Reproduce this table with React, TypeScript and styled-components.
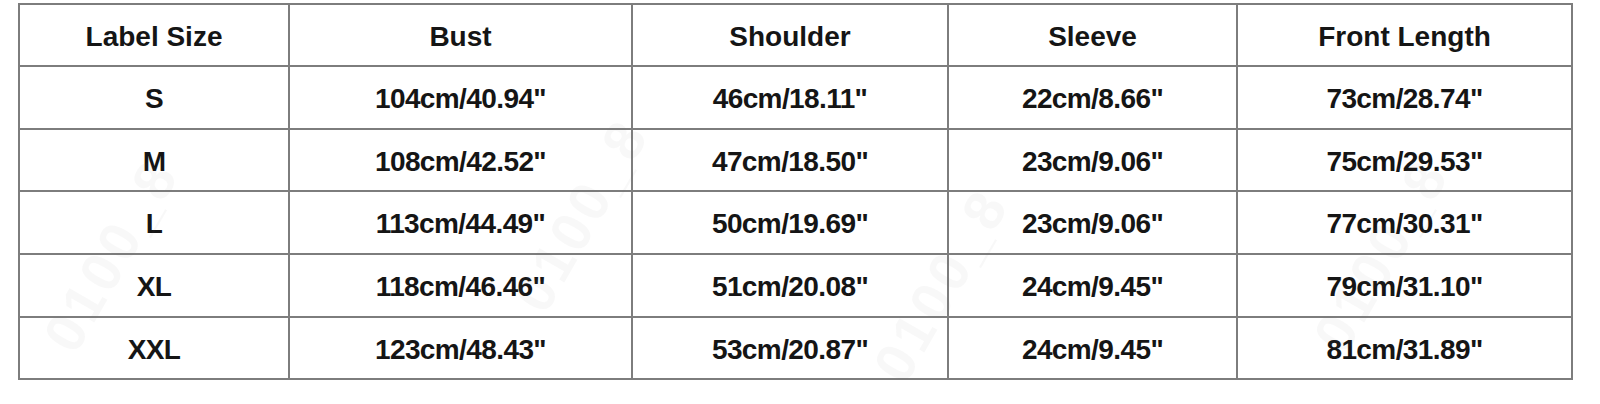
import React from "react";
import styled, { createGlobalStyle } from "styled-components";

const Global = createGlobalStyle`
  html, body { margin: 0; padding: 0; background: #ffffff; }
  body { font-family: "Liberation Sans", Arial, sans-serif; }
`;

const Page = styled.div`
  position: relative;
  width: 1600px;
  height: 404px;
  overflow: hidden;
  padding: 3px 0 0 18px;
  box-sizing: border-box;
`;

const Grid = styled.div`
  display: grid;
  grid-template-columns: 268px 341px 314px 287px 333px;
  grid-template-rows: 60px 61px 60px 61px 61px 60px;
  gap: 2px;
  padding: 2px;
  width: max-content;
  background: #7d7d7d;
`;

const Cell = styled.div<{ $head?: boolean }>`
  background: #ffffff;
  display: flex;
  align-items: center;
  justify-content: center;
  font-family: "Liberation Sans", Arial, sans-serif;
  font-weight: 700;
  font-size: 28px;
  letter-spacing: ${(p) => (p.$head ? "0" : "-0.6px")};
  color: #151515;
  padding-top: 3px;
`;

const Watermark = styled.span<{ $x: number; $y: number }>`
  position: absolute;
  left: ${(p) => p.$x}px;
  top: ${(p) => p.$y}px;
  transform: rotate(-60deg);
  transform-origin: left top;
  font-family: "Liberation Sans", Arial, sans-serif;
  font-size: 56px;
  font-weight: 700;
  color: rgba(120, 120, 120, 0.05);
  pointer-events: none;
  white-space: nowrap;
  letter-spacing: 4px;
`;

const headers = ["Label Size", "Bust", "Shoulder", "Sleeve", "Front Length"];
const rows = [
  ["S", '104cm/40.94"', '46cm/18.11"', '22cm/8.66"', '73cm/28.74"'],
  ["M", '108cm/42.52"', '47cm/18.50"', '23cm/9.06"', '75cm/29.53"'],
  ["L", '113cm/44.49"', '50cm/19.69"', '23cm/9.06"', '77cm/30.31"'],
  ["XL", '118cm/46.46"', '51cm/20.08"', '24cm/9.45"', '79cm/31.10"'],
  ["XXL", '123cm/48.43"', '53cm/20.87"', '24cm/9.45"', '81cm/31.89"'],
];

const marks = [
  { x: 30, y: 330 },
  { x: 500, y: 290 },
  { x: 860, y: 360 },
  { x: 1300, y: 330 },
];

export default function App() {
  return (
    <>
      <Global />
      <Page>
        <Grid>
          {headers.map((h) => (
            <Cell key={h} $head>
              {h}
            </Cell>
          ))}
          {rows.map((r) =>
            r.map((c, i) => <Cell key={r[0] + i}>{c}</Cell>)
          )}
        </Grid>
        {marks.map((m, i) => (
          <Watermark key={i} $x={m.x} $y={m.y}>
            0100_8
          </Watermark>
        ))}
      </Page>
    </>
  );
}
